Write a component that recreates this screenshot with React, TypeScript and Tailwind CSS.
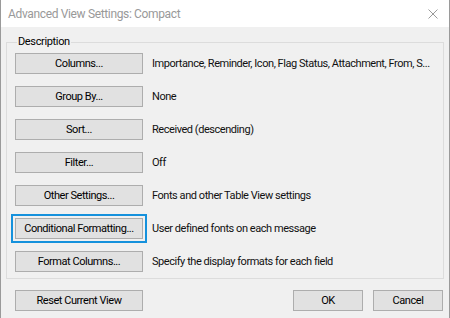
import React from "react";

const rows: { label: string; desc: string; focused?: boolean }[] = [
  { label: "Columns...", desc: "Importance, Reminder, Icon, Flag Status, Attachment, From, S..." },
  { label: "Group By...", desc: "None" },
  { label: "Sort...", desc: "Received (descending)" },
  { label: "Filter...", desc: "Off" },
  { label: "Other Settings...", desc: "Fonts and other Table View settings" },
  { label: "Conditional Formatting...", desc: "User defined fonts on each message", focused: true },
  { label: "Format Columns...", desc: "Specify the display formats for each field" },
];

function Btn({ children, className = "", focused = false }: { children: React.ReactNode; className?: string; focused?: boolean }) {
  return (
    <div
      className={
        "h-[21px] flex items-center justify-center bg-[#e1e1e1] border border-[#adadad] text-[11px] tracking-[-0.45px] text-[#000] leading-none whitespace-nowrap " +
        (focused ? "outline-2 outline-solid outline-offset-2 outline-[#1591dc] " : "") +
        className
      }
    >
      {children}
    </div>
  );
}

export default function App() {
  return (
    <div
      className="w-[450px] h-[318px] bg-[#f0f0f0] border-x border-[#9a9a9a] flex flex-col overflow-hidden"
      style={{ fontFamily: 'Roboto, "Noto Sans", sans-serif' }}
    >
      <div className="h-[27px] bg-white flex items-center justify-between pl-[7px] pr-[11px] shrink-0">
        <span className="text-[12px] tracking-[-0.35px] text-[#999999] leading-none mt-[1px]">Advanced View Settings: Compact</span>
        <svg width="10" height="10" viewBox="0 0 10 10" className="mt-[1px]">
          <path d="M0.5 0.5 L9.5 9.5 M9.5 0.5 L0.5 9.5" stroke="#9a9a9a" strokeWidth="1" fill="none" />
        </svg>
      </div>
      <fieldset className="mt-[8px] ml-[5px] mr-[5px] border border-[#dcdcdc] pl-[8px] pr-[6px] pt-[4px] pb-[6px] flex flex-col gap-[12px]">
        <legend className="ml-[2px] px-[1px] text-[11px] tracking-[-0.35px] leading-[14px] text-[#000]">Description</legend>
        {rows.map((r) => (
          <div key={r.label} className="flex items-center gap-[9px]">
            <Btn className="w-[128px] shrink-0" focused={r.focused}>
              {r.label}
            </Btn>
            <span className="text-[11px] tracking-[-0.45px] text-[#111] whitespace-nowrap leading-none">{r.desc}</span>
          </div>
        ))}
      </fieldset>
      <div className="mt-[11px] flex items-center pl-[14px] pr-[6px]">
        <Btn className="w-[128px]">Reset Current View</Btn>
        <div className="flex-1" />
        <Btn className="w-[70px]">OK</Btn>
        <Btn className="w-[70px] ml-[10px]">Cancel</Btn>
      </div>
    </div>
  );
}
